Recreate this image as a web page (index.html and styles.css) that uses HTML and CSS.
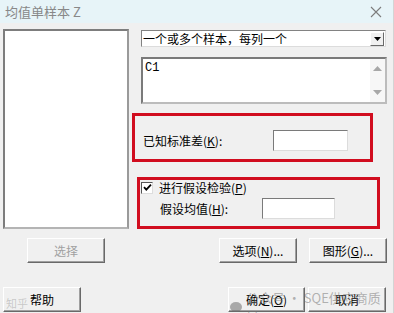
FILE: index.html
```html
<!DOCTYPE html>
<html lang="zh-CN">
<head>
    <meta charset="UTF-8">
    <title>均值单样本 Z</title>
    <link rel="stylesheet" href="styles.css">
</head>
<body>
<div class="dlg">
    <div class="titlebar">
        <span class="title">均值单样本 Z</span>
        <svg class="close" width="12" height="12" viewBox="0 0 12 12">
            <path d="M1 1L11 11M11 1L1 11" stroke="#7c7c7c" stroke-width="1.1" fill="none"/>
        </svg>
    </div>

    <div class="main">
        <div class="varlist"></div>

        <div class="side">
            <div class="combo">
                <span class="combo-text">一个或多个样本，每列一个</span>
                <span class="combo-btn">
                    <svg width="7" height="4" viewBox="0 0 7 4"><path d="M0 0H7L3.5 4Z" fill="#000"/></svg>
                </span>
            </div>

            <div class="memo">
                <span class="memo-text">C1</span>
                <div class="vscroll">
                    <svg width="9" height="5" viewBox="0 0 9 5"><path d="M0 5H9L4.5 0Z" fill="#a8a8a8"/></svg>
                    <svg width="9" height="5" viewBox="0 0 9 5"><path d="M0 0H9L4.5 5Z" fill="#a8a8a8"/></svg>
                </div>
            </div>

            <div class="mark mark-sigma">
                <span class="lbl">已知标准差(<u>K</u>):</span>
                <span class="field field-sigma"></span>
            </div>

            <div class="mark mark-test">
                <div class="chk-row">
                    <span class="chk">
                        <svg width="9" height="9" viewBox="0 0 9 9"><path d="M1 4.2L3.3 6.6L8 1.6" stroke="#000" stroke-width="1.8" fill="none"/></svg>
                    </span>
                    <span>进行假设检验(<u>P</u>)</span>
                </div>
                <div class="mu-row">
                    <span class="lbl lbl-mu">假设均值(<u>H</u>):</span>
                    <span class="field field-mu"></span>
                </div>
            </div>
        </div>
    </div>

    <div class="btn-row row1">
        <span class="btn btn-off pick">选择</span>
        <span class="btn opts">选项(<u>N</u>)...</span>
        <span class="btn">图形(<u>G</u>)...</span>
    </div>
    <div class="btn-row row2">
        <span class="btn">帮助</span>
        <span class="btn ok">确定(<u>O</u>)</span>
        <span class="btn">取消</span>
    </div>

    <div class="wm">
        <span class="wm-icon"></span>
        <span>公众号 · SQE供应商质量</span>
    </div>
    <div class="wm-left">知乎</div>
</div>
</body>
</html>
```

FILE: styles.css
```css
*{
    margin:0;
    padding:0;
    box-sizing:border-box;
}
body{
    width:394px;
    height:313px;
    overflow:hidden;
    background:#f0f0f0;
    font-family:"Noto Sans CJK SC","Liberation Sans",sans-serif;
    font-size:12px;
    color:#000;
}
u{
    text-decoration:underline;
}
.dlg{
    position:relative;
    width:394px;
    height:313px;
    border-right:1px solid #d4d4d4;
}
.titlebar{
    height:23px;
    background:#e7f4f8;
    display:flex;
    align-items:center;
    justify-content:space-between;
    padding:0 11px 0 5px;
}
.title{
    font-size:13px;
    color:#888;
}

/* main area */
.main{
    display:flex;
    padding-top:6px;
}
.varlist{
    margin-left:3px;
    width:126px;
    height:200px;
    background:#fff;
    border:2px solid #7d7d7d;
    border-right-color:#9a9a9a;
    border-bottom-color:#b4b4b4;
}
.side{
    margin-left:3px;
    display:flex;
    flex-direction:column;
}
.combo{
    margin:1px 0 0 9px;
    width:245px;
    height:17px;
    background:#fff;
    border:1px solid #828282;
    border-right-color:#dcdcdc;
    border-bottom-color:#dcdcdc;
    display:flex;
    align-items:center;
    justify-content:space-between;
}
.combo-text{
    padding-left:1px;
    line-height:14px;
}
.combo-btn{
    width:14px;
    height:14px;
    margin-right:1px;
    background:#f0f0f0;
    border:1px solid;
    border-color:#fff #696969 #696969 #fff;
    display:flex;
    align-items:center;
    justify-content:center;
}
.memo{
    margin:10px 0 0 9px;
    width:246px;
    height:47px;
    background:#fff;
    border:2px solid #7a7a7a;
    border-right-color:#bcbcbc;
    border-bottom-color:#bcbcbc;
    display:flex;
    justify-content:space-between;
}
.memo-text{
    font-family:"Liberation Mono",monospace;
    font-size:12px;
    padding:2px 0 0 2px;
}
.vscroll{
    width:15px;
    background:#f7f7f7;
    display:flex;
    flex-direction:column;
    justify-content:space-between;
    align-items:center;
    padding:7px 0 7px;
}

/* red marker boxes */
.mark{
    border:3px solid #d10d1f;
}
.mark-sigma{
    margin-top:9px;
    width:241px;
    height:49px;
    display:flex;
    align-items:center;
    padding:6px 0 0 8px;
}
.lbl{
    width:130px;
}
.field{
    display:block;
    height:21px;
    background:#fff;
    border:1px solid #7a7a7a;
    border-right-color:#dcdcdc;
    border-bottom-color:#dcdcdc;
}
.field-sigma{
    width:75px;
}
.mark-test{
    margin:15px 0 0 5px;
    width:243px;
    height:52px;
    padding:0 0 0 1px;
}
.chk-row{
    display:flex;
    align-items:center;
    height:17px;
    gap:6px;
    margin-top:-1px;
}
.chk{
    width:12px;
    height:12px;
    background:#fff;
    border:1px solid #555;
    border-right-color:#ddd;
    border-bottom-color:#ddd;
    display:flex;
    align-items:center;
    justify-content:center;
}
.mu-row{
    display:flex;
    align-items:center;
    margin:2px 0 0 19px;
}
.lbl-mu{
    width:102px;
}
.field-mu{
    width:73px;
}

/* buttons */
.btn-row{
    display:flex;
}
.row1{
    margin-top:9px;
}
.row2{
    margin-top:24px;
}
.btn{
    width:78px;
    height:25px;
    display:flex;
    align-items:center;
    justify-content:center;
    background:#f0f0f0;
    border:1px solid;
    border-color:#fff #696969 #696969 #fff;
    box-shadow:inset -1px -1px 0 #a0a0a0;
    font-size:12px;
}
.btn-off{
    color:#a0a0a0;
}
.pick{
    margin:0 114px 0 27px;
}
.opts{
    margin-right:12px;
}
.row2 .btn:first-child{
    margin-left:3px;
}
.ok{
    margin:0 3px 0 147px;
    width:77px;
}

/* watermark */
.wm{
    position:absolute;
    left:230px;
    top:288px;
    display:flex;
    align-items:center;
    gap:4px;
    color:rgba(120,120,120,0.55);
    font-size:13px;
}
.wm-icon{
    width:12px;
    height:10px;
    border-radius:50%;
    background:rgba(110,110,110,0.55);
}
.wm-left{
    position:absolute;
    left:6px;
    top:295px;
    font-size:11px;
    color:rgba(150,150,150,0.45);
}
```
